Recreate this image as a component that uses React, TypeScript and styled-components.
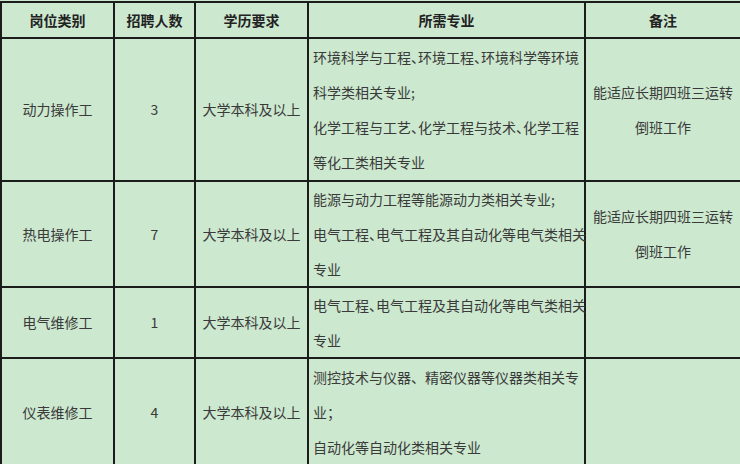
import React from "react";
import styled, { createGlobalStyle } from "styled-components";

const GlobalStyle = createGlobalStyle`
  html, body {
    margin: 0;
    padding: 0;
    background: #cce8cf;
    overflow: hidden;
  }
  * { box-sizing: border-box; }
`;

const Table = styled.div`
  display: grid;
  grid-template-columns: 113px 81px 113px 277px 156px;
  grid-template-rows: 36px 143px 106px 71px 108px;
  width: max-content;
  margin-top: 1px;
  border-top: 2px solid #1c1c1c;
  border-left: 2px solid #1c1c1c;
  background: #cce8cf;
  font-family: "Noto Sans CJK SC", "Noto Sans", sans-serif;
  font-size: 14px;
  color: #3a3a3a;
`;

const Cell = styled.div<{ $align?: "left" | "center"; $head?: boolean }>`
  border-right: 2px solid #1c1c1c;
  border-bottom: 2px solid #1c1c1c;
  display: flex;
  flex-direction: column;
  justify-content: center;
  align-items: ${(p) => (p.$align === "left" ? "flex-start" : "center")};
  text-align: ${(p) => (p.$align === "left" ? "left" : "center")};
  padding: ${(p) => (p.$align === "left" ? "0 2px 0 4px" : "0 4px")};
  font-weight: ${(p) => (p.$head ? 700 : 400)};
  color: ${(p) => (p.$head ? "#222" : "#3a3a3a")};
  line-height: 35px;
  overflow: visible;
`;

const Line = styled.span`
  display: block;
  white-space: nowrap;
  height: 35px;
`;

const Punct = styled.span<{ $half: boolean }>`
  font-feature-settings: ${(p) => (p.$half ? '"halt"' : "normal")};
`;

const P = ({ children, half }: { children: string; half: boolean }) => {
  const parts = children.split("、");
  return (
    <Line>
      {parts.map((s, i) => (
        <React.Fragment key={i}>
          {s}
          {i < parts.length - 1 && <Punct $half={half}>、</Punct>}
        </React.Fragment>
      ))}
    </Line>
  );
};

type Row = {
  name: string;
  count: string;
  edu: string;
  major: string[];
  note: string[];
  halfPunct: boolean;
};

const rows: Row[] = [
  {
    name: "动力操作工",
    count: "3",
    edu: "大学本科及以上",
    major: [
      "环境科学与工程、环境工程、环境科学等环境",
      "科学类相关专业;",
      "化学工程与工艺、化学工程与技术、化学工程",
      "等化工类相关专业",
    ],
    note: ["能适应长期四班三运转", "倒班工作"],
    halfPunct: true,
  },
  {
    name: "热电操作工",
    count: "7",
    edu: "大学本科及以上",
    major: [
      "能源与动力工程等能源动力类相关专业;",
      "电气工程、电气工程及其自动化等电气类相关",
      "专业",
    ],
    note: ["能适应长期四班三运转", "倒班工作"],
    halfPunct: true,
  },
  {
    name: "电气维修工",
    count: "1",
    edu: "大学本科及以上",
    major: ["电气工程、电气工程及其自动化等电气类相关", "专业"],
    note: [],
    halfPunct: true,
  },
  {
    name: "仪表维修工",
    count: "4",
    edu: "大学本科及以上",
    major: [
      "测控技术与仪器、精密仪器等仪器类相关专",
      "业；",
      "自动化等自动化类相关专业",
    ],
    note: [],
    halfPunct: false,
  },
];

const headers = ["岗位类别", "招聘人数", "学历要求", "所需专业", "备注"];

export default function App() {
  return (
    <>
      <GlobalStyle />
      <Table>
        {headers.map((h) => (
          <Cell key={h} $head>
            {h}
          </Cell>
        ))}
        {rows.map((r) => (
          <React.Fragment key={r.name}>
            <Cell>{r.name}</Cell>
            <Cell>{r.count}</Cell>
            <Cell>{r.edu}</Cell>
            <Cell $align="left">
              {r.major.map((m, i) => (
                <P key={i} half={r.halfPunct}>
                  {m}
                </P>
              ))}
            </Cell>
            <Cell>
              {r.note.map((n, i) => (
                <Line key={i}>{n}</Line>
              ))}
            </Cell>
          </React.Fragment>
        ))}
      </Table>
    </>
  );
}
